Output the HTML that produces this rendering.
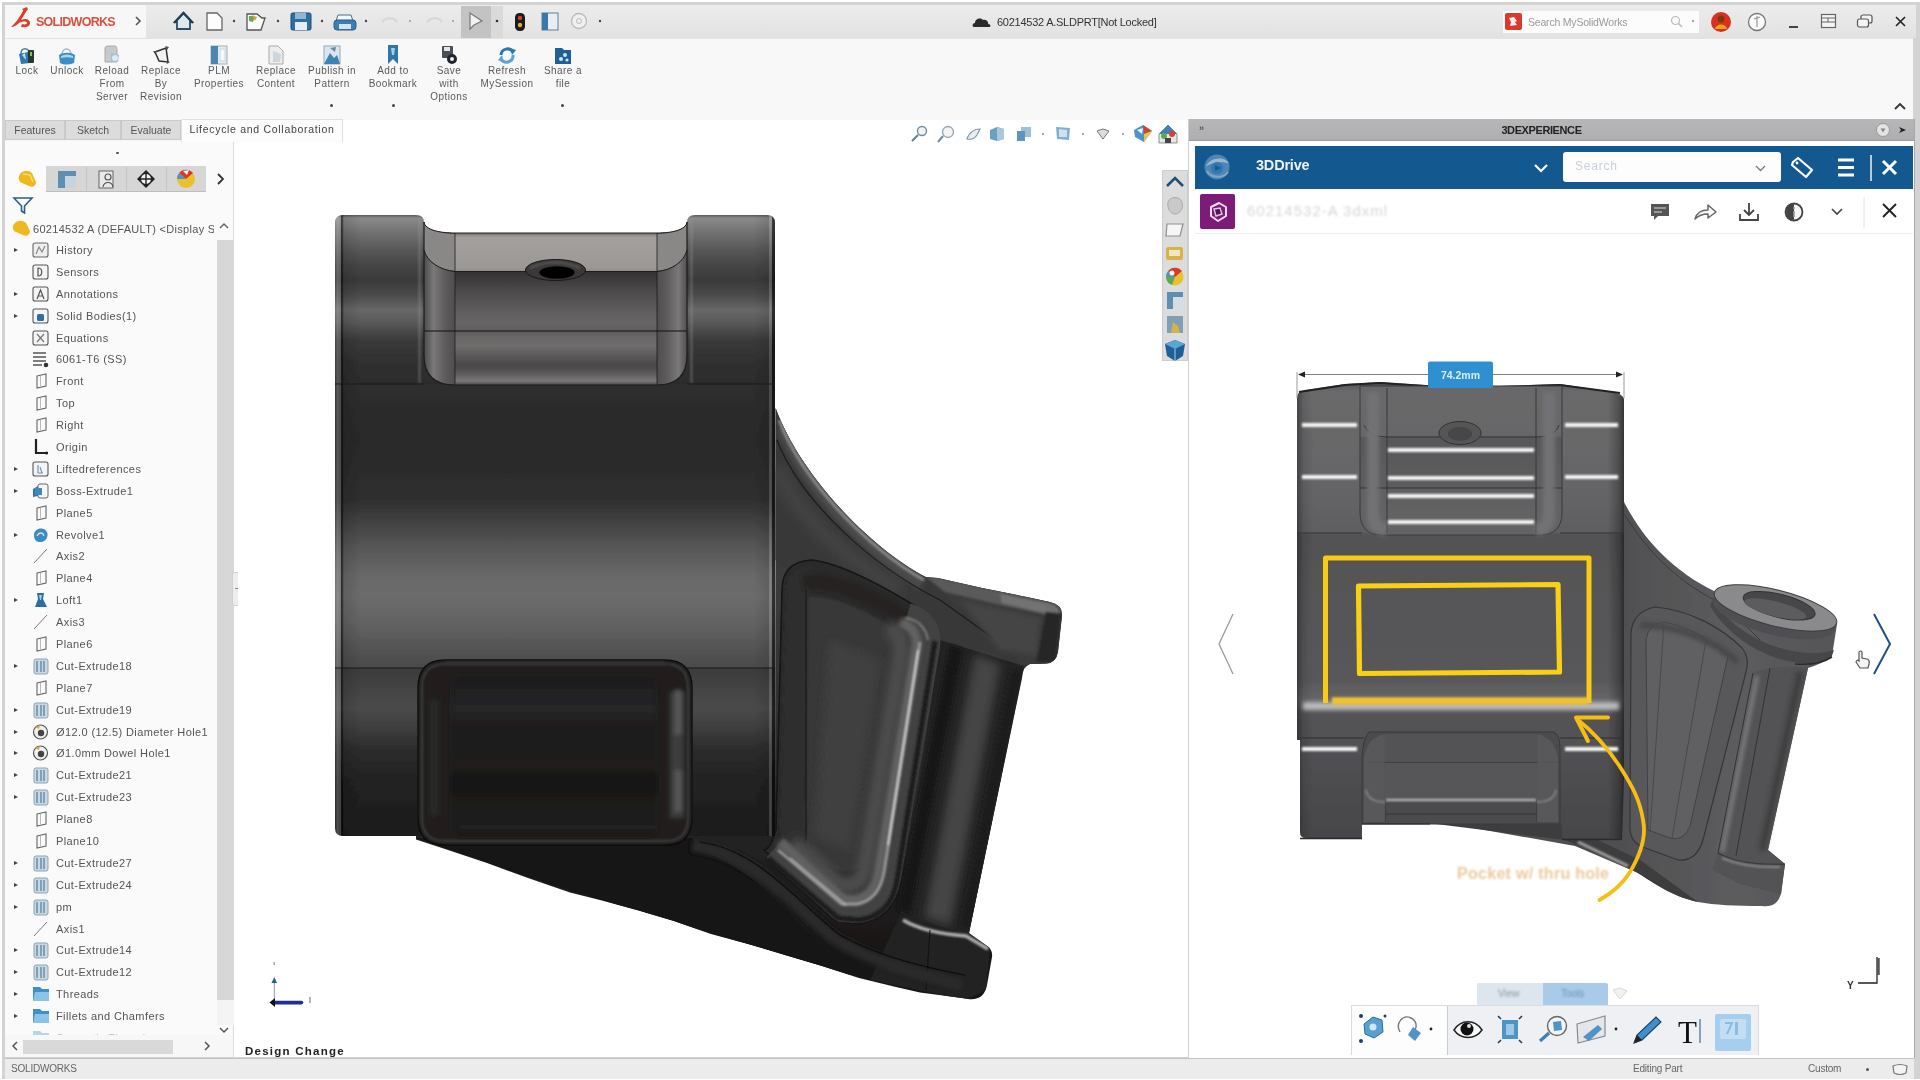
<!DOCTYPE html>
<html lang="en">
<head>
<meta charset="utf-8">
<title>SOLIDWORKS - Lifecycle and Collaboration</title>
<style>
html,body{margin:0;padding:0;}
body{width:1920px;height:1080px;overflow:hidden;position:relative;background:#fff;font-family:"Liberation Sans",sans-serif;font-size:11px;color:#333;}
.abs{position:absolute;}
#frame{position:absolute;left:1.5px;top:1.5px;width:1918px;height:1077.5px;background:#d3d3d3;}
#titlebar{position:absolute;left:5px;top:4.5px;width:1911px;height:33.5px;background:linear-gradient(#ececec,#e2e2e2);}
#logoarea{position:absolute;left:0;top:0;width:141px;height:34px;background:#f7f7f7;}
#ribbon{position:absolute;left:5px;top:38px;width:1908px;height:81px;background:#f8f8f8;border-top:1px solid #e3e3e3;box-sizing:border-box;}
.rb{position:absolute;top:6px;text-align:center;font-size:10px;line-height:12.8px;color:#5a5a5a;letter-spacing:.45px;filter:blur(.6px);}
.rb .ic{display:block;position:static;margin:0 auto 0;width:20px;height:20px;}
#tabs{position:absolute;left:5px;top:119px;height:23px;width:1183px;background:#f8f8f8;}
.tab{position:absolute;top:1px;height:20px;background:#dcdcdc;border:1px solid #c9c9c9;box-sizing:border-box;font-size:10.5px;line-height:19px;text-align:center;color:#555;filter:blur(.5px);}
.tab.on{letter-spacing:.7px;background:#fcfcfc;border-color:#e0e0e0;border-bottom:none;height:23px;top:0;color:#444;}
#left{position:absolute;left:5px;top:142px;width:229px;height:915px;background:#fafafa;border-right:1px solid #dcdcdc;box-sizing:border-box;}
#view{position:absolute;left:238px;top:142px;width:950px;height:915px;background:#fff;}
#tabs-white{position:absolute;left:343px;top:120px;width:845px;height:24px;background:#fff;}
#splitter{position:absolute;left:234px;top:142px;width:4px;height:915px;background:#fff;}
.tr{position:absolute;left:0;height:22px;width:215px;font-size:11px;line-height:22px;color:#444;white-space:nowrap;}
.tr .ar{position:absolute;left:9px;top:9px;width:0;height:0;border-left:4px solid #444;border-top:2.5px solid transparent;border-bottom:2.5px solid transparent;}
.tr .ti{position:absolute;left:27px;top:3px;width:17px;height:16px;}
.tr .tx{position:absolute;left:51px;top:0;filter:blur(.6px);letter-spacing:.4px;color:#555;}
#status{position:absolute;left:5px;top:1058px;width:1909px;height:21px;background:#ececec;border-top:1px solid #c4c4c4;box-sizing:border-box;font-size:10px;color:#666;}
#rpanel{position:absolute;left:1188px;top:119px;width:726px;height:939px;background:#fff;border-left:1px solid #d0d0d0;box-sizing:border-box;}
#rhead{position:absolute;left:0;top:0;width:725px;height:22px;background:linear-gradient(#b7b6b9,#aeadb0);border-bottom:1px solid #9c9c9e;box-sizing:border-box;font-size:11px;font-weight:bold;color:#222;text-align:center;line-height:22px;}
#bluebar{position:absolute;left:6px;top:27px;width:718px;height:43px;background:#13588f;}
#subbar{position:absolute;left:6px;top:70px;width:718px;height:44px;background:#fff;border-bottom:1px solid #efefef;}
svg{position:absolute;overflow:visible;}
.blur{filter:blur(.6px);}
</style>
</head>
<body>
<div id="frame"></div>
<div id="titlebar">
  <div id="logoarea"></div>
  <!-- DS logo + SOLIDWORKS -->
  <svg class="blur" style="left:2.5px;top:1px" width="140" height="28" viewBox="0 0 140 28">
    <path d="M3 21 C8 17 13 9 16 3 L19 4 C17 8 14 12 13 14 C17 12 22 13 22 17 C22 21 17 22 13 21 L14 18 C17 19 19 18 19 17 C19 15 15 15 11 17 C9 19 6 21 3 21Z" fill="#d8402c"/>
    <path d="M14 3 L19 1 L20 4 L16 5Z" fill="#d8402c"/>
    <text x="28" y="20" font-family="Liberation Sans, sans-serif" font-size="12.5" font-weight="bold" fill="#d9503f" letter-spacing="-0.6" textLength="79">SOLIDWORKS</text>
  </svg>
  <svg style="left:129px;top:10px" width="8" height="12"><path d="M2 2 L6 6 L2 10" fill="none" stroke="#555" stroke-width="1.6"/></svg>
  <!-- quick access icons -->
  <svg class="blur" style="left:160px;top:0" width="460" height="34" viewBox="0 0 460 34">
    <!-- home -->
    <path d="M10 17 L18.5 8 L27 17 L25 17 L25 24 L12 24 L12 17Z" fill="#dfe8ee" stroke="#2c4d66" stroke-width="1.8"/>
    <path d="M9 18 L18.5 8 L28 18" fill="none" stroke="#1f3f57" stroke-width="2.4"/>
    <!-- new -->
    <path d="M42 8 L52 8 L57 13 L57 25 L42 25Z" fill="#fdfdfd" stroke="#666" stroke-width="1.3"/>
    <circle cx="69" cy="16" r="1.2" fill="#444"/>
    <!-- open -->
    <path d="M82 9 L92 9 L97 13 L100 13 L96 25 L82 25Z" fill="#fafafa" stroke="#555" stroke-width="1.3"/>
    <path d="M84 11 L90 11 L88 17 L84 16Z" fill="#6aa84f"/>
    <path d="M87 10 L92 12 L90 16Z" fill="#d9a441"/>
    <circle cx="113" cy="16" r="1.2" fill="#444"/>
    <!-- save -->
    <rect x="126" y="8" width="20" height="17" rx="1.5" fill="#2f6f9e" stroke="#1f4f78" stroke-width="1"/>
    <rect x="130" y="8" width="11" height="6" fill="#8fb7d4"/>
    <rect x="130" y="17" width="12" height="8" fill="#e6edf3"/>
    <circle cx="157" cy="16" r="1.2" fill="#444"/>
    <!-- print -->
    <path d="M173 10 L186 10 L188 16 L171 16Z" fill="#f4f6f8" stroke="#4d6f8c" stroke-width="1"/>
    <rect x="169" y="15" width="22" height="10" rx="3" fill="#3b7fb0" stroke="#2a5d85" stroke-width="1"/>
    <rect x="174" y="19" width="12" height="5" fill="#d4e3ef"/>
    <circle cx="201" cy="16" r="1.2" fill="#444"/>
    <!-- undo / redo faint -->
    <path d="M217 17 C221 12 229 12 232 17" fill="none" stroke="#d6d6d6" stroke-width="2.2"/>
    <circle cx="245" cy="16" r="1" fill="#999"/>
    <path d="M262 17 C266 12 274 12 277 17" fill="none" stroke="#d6d6d6" stroke-width="2.2"/>
    <circle cx="288" cy="16" r="1" fill="#999"/>
    <!-- select highlighted -->
    <rect x="296" y="1" width="30" height="32" fill="#c3c3c3"/>
    <rect x="326" y="1" width="12" height="32" fill="#dadada"/>
    <path d="M305 8 L305 24 L309 20 L317 16Z" fill="#f2f2f2" stroke="#777" stroke-width="1.2"/>
    <circle cx="332" cy="16" r="1.3" fill="#333"/>
    <!-- traffic light -->
    <rect x="350" y="8" width="10" height="18" rx="4.5" fill="#1b1b1b"/>
    <circle cx="355" cy="13" r="2.2" fill="#d9412f"/>
    <circle cx="355" cy="20" r="2.2" fill="#d9b23a"/>
    <!-- options -->
    <rect x="377" y="8" width="16" height="17" fill="#e9eef2" stroke="#5f7f99" stroke-width="1"/>
    <rect x="377" y="8" width="6" height="17" fill="#3c78a6"/>
    <!-- gear -->
    <circle cx="414" cy="16" r="7.5" fill="#f0f0f0" stroke="#bbb" stroke-width="1.3"/>
    <circle cx="414" cy="16" r="2.5" fill="none" stroke="#bbb" stroke-width="1"/>
    <circle cx="435" cy="16" r="1.2" fill="#444"/>
  </svg>
  <!-- title -->
  <svg class="blur" style="left:966px;top:9px" width="200" height="18" viewBox="0 0 200 18">
    <path d="M3 13 C1 13 1 9 4 9 C4 5 9 3 12 6 C15 5 18 8 17 10 C20 10 20 13 18 13Z" fill="#2b2b2b"/>
  </svg>
  <div class="abs blur" style="left:992px;top:9px;width:170px;height:16px;font-size:11px;line-height:16px;color:#333;white-space:nowrap;letter-spacing:-.25px;">60214532 A.SLDPRT[Not Locked]</div>
  <!-- search -->
  <div class="abs" style="left:1498px;top:6px;width:196px;height:22px;background:#fcfcfc;"></div>
  <svg class="blur" style="left:1500px;top:8px" width="18" height="18"><rect x="0" y="0" width="17" height="17" rx="2" fill="#d93a2b"/><path d="M4 5 L9 4 L12 8 L10 9 L12 12 L5 13 L6 9Z" fill="#fff" opacity=".9"/></svg>
  <div class="abs blur" style="left:1523px;top:9px;font-size:10.5px;line-height:16px;color:#9a9a9a;white-space:nowrap;letter-spacing:-.2px;">Search MySolidWorks</div>
  <svg class="blur" style="left:1664px;top:9px" width="34" height="16"><circle cx="6.5" cy="6.5" r="4" fill="none" stroke="#bbb" stroke-width="1.2"/><path d="M9.5 9.5 L13 13" stroke="#bbb" stroke-width="1.4"/><circle cx="24" cy="7" r="1" fill="#888"/></svg>
  <!-- avatar -->
  <svg class="blur" style="left:1704px;top:5px" width="26" height="26"><circle cx="12" cy="12" r="10" fill="#d9301f"/><circle cx="12" cy="9" r="3.5" fill="#7a3b14"/><path d="M6 19 C7 13 17 13 18 19Z" fill="#e8a321"/></svg>
  <svg class="blur" style="left:1741px;top:6px" width="24" height="24"><circle cx="11" cy="11" r="8.5" fill="#fafafa" stroke="#777" stroke-width="1.3"/><path d="M11 5 L11 16 M8 8 L14 6" stroke="#999" stroke-width="1.2" fill="none"/></svg>
  <div class="abs" style="left:1784px;top:21px;width:9px;height:2px;background:#444;filter:blur(.4px)"></div>
  <svg class="blur" style="left:1815px;top:8px" width="20" height="18"><rect x="1.5" y="1.5" width="14" height="13" fill="#f4f4f4" stroke="#666" stroke-width="1.2"/><path d="M1.5 5 H15.5 M1.5 9 H15.5 M8 5 V9" stroke="#666" stroke-width="1"/></svg>
  <svg class="blur" style="left:1851px;top:8px" width="20" height="18"><rect x="5" y="2" width="11" height="8" rx="2" fill="#f4f4f4" stroke="#555" stroke-width="1.2"/><rect x="1.5" y="6" width="11" height="8" rx="2" fill="#f4f4f4" stroke="#555" stroke-width="1.2"/></svg>
  <svg class="blur" style="left:1889px;top:10px" width="14" height="14"><path d="M2 2 L11 11 M11 2 L2 11" stroke="#222" stroke-width="1.6"/></svg>
</div>
<div id="ribbon">
  <div class="rb" style="left:2px;width:40px"><svg class="ic" viewBox="0 0 20 20"><path d="M4 9 C4 2 12 2 12 9" fill="none" stroke="#4b7fa6" stroke-width="1.6"/><path d="M2 9 L11 7 L13 18 L4 19Z" fill="#2f79ad"/><path d="M5 10 L8 8 L9 15Z" fill="#bfe0f2"/><rect x="11" y="5" width="6" height="13" rx="1" fill="#263a2c"/><rect x="13" y="7" width="2" height="4" fill="#8bc34a"/></svg>Lock</div>
  <div class="rb" style="left:40px;width:44px"><svg class="ic" viewBox="0 0 20 20"><path d="M5 10 C5 2 14 2 14 10" fill="none" stroke="#9fb6c6" stroke-width="1.6"/><path d="M2 10 C6 7 14 7 18 10 L17 18 C12 20 7 20 3 18Z" fill="#3c8fc4"/><path d="M4 11 C8 9 12 9 16 11 L16 13 C12 12 8 12 4 13Z" fill="#a8d4ee"/></svg>Unlock</div>
  <div class="rb" style="left:82px;width:50px"><svg class="ic" viewBox="0 0 20 20"><path d="M3 3 C3 1 6 1 8 1 L13 1 C15 1 15 4 15 6 L15 17 L3 17Z" fill="#c9c9c9" stroke="#a9a9a9"/><path d="M9 8 L17 10 L16 17 L9 17Z" fill="#9fc1d8"/><circle cx="13" cy="13" r="3" fill="#dfeaf1"/></svg>Reload<br>From<br>Server</div>
  <div class="rb" style="left:130px;width:52px"><svg class="ic" viewBox="0 0 20 20"><path d="M4 7 L15 3 L17 17 L8 16Z" fill="#f2f2f2" stroke="#2f2f2f" stroke-width="1.5"/><path d="M2 6 L6 6 L4 9Z M14 1 L18 2 L16 5Z M15 16 L19 17 L16 19Z" fill="#3d5468"/></svg>Replace<br>By<br>Revision</div>
  <div class="rb" style="left:184px;width:60px"><svg class="ic" viewBox="0 0 20 20"><rect x="2" y="1" width="16" height="18" fill="#e7ebee" stroke="#9fb0bc"/><rect x="2" y="1" width="7" height="18" fill="#4b86b3"/><rect x="11" y="4" width="5" height="12" fill="#f7f7f7" stroke="#b9c3ca" stroke-width=".6"/></svg>PLM<br>Properties</div>
  <div class="rb" style="left:244px;width:54px"><svg class="ic" viewBox="0 0 20 20"><path d="M3 1 L12 1 L17 6 L17 19 L3 19Z" fill="#ededed" stroke="#ababab"/><path d="M7 6 L15 9 L14 17 L7 17Z" fill="#cfd6db"/></svg>Replace<br>Content</div>
  <div class="rb" style="left:297px;width:60px"><svg class="ic" viewBox="0 0 20 20"><rect x="2" y="1" width="16" height="18" fill="#d9e6ef" stroke="#8fa9bb"/><path d="M2 19 L8 8 L12 13 L15 10 L18 19Z" fill="#3d82b3"/><path d="M8 3 L14 2 L13 7Z" fill="#6f8797"/></svg>Publish in<br>Pattern</div>
  <div class="rb" style="left:360px;width:56px"><svg class="ic" viewBox="0 0 20 20"><path d="M5 0 L15 0 L15 19 L10 14 L5 19Z" fill="#2f77ab"/><path d="M8 3 L12 3 L11 10 L9 10Z" fill="#9fd0ee"/></svg>Add to<br>Bookmark</div>
  <div class="rb" style="left:420px;width:48px"><svg class="ic" viewBox="0 0 20 20"><rect x="3" y="1" width="11" height="12" rx="1" fill="#4a4f57"/><rect x="5" y="2" width="6" height="4" fill="#e6e6e6"/><circle cx="13" cy="14" r="5" fill="#20262e"/><circle cx="13" cy="14" r="2" fill="#eee"/></svg>Save<br>with<br>Options</div>
  <div class="rb" style="left:472px;width:60px"><svg class="ic" viewBox="0 0 20 20"><path d="M4 10 A6.5 6.5 0 0 1 16 7" fill="none" stroke="#2a78ad" stroke-width="3"/><path d="M16 10 A6.5 6.5 0 0 1 4 14" fill="none" stroke="#5aa5d4" stroke-width="3"/><path d="M13 3 L19 5 L15 10Z" fill="#2a78ad"/><path d="M7 18 L1 15 L5 10Z" fill="#5aa5d4"/></svg>Refresh<br>MySession</div>
  <div class="rb" style="left:536px;width:44px"><svg class="ic" viewBox="0 0 20 20"><path d="M2 3 L9 3 L11 5 L18 5 L18 19 L2 19Z" fill="#1f5f98"/><circle cx="12" cy="10" r="2" fill="#cfe6f6"/><circle cx="8" cy="14" r="2" fill="#cfe6f6"/><circle cx="14" cy="15" r="1.6" fill="#cfe6f6"/></svg>Share a<br>file</div>
  <div class="abs" style="left:325px;top:65px;width:3px;height:3px;border-radius:2px;background:#444;filter:blur(.3px)"></div>
  <div class="abs" style="left:387px;top:65px;width:3px;height:3px;border-radius:2px;background:#444;filter:blur(.3px)"></div>
  <div class="abs" style="left:556px;top:65px;width:3px;height:3px;border-radius:2px;background:#444;filter:blur(.3px)"></div>
  <svg style="left:1888px;top:62px" width="14" height="10"><path d="M2 8 L7 3 L12 8" fill="none" stroke="#333" stroke-width="1.8"/></svg>
</div>
<div id="tabs">
  <div class="tab" style="left:0;width:60px">Features</div>
  <div class="tab" style="left:60px;width:56px">Sketch</div>
  <div class="tab" style="left:116px;width:60px">Evaluate</div>
  <div class="tab on" style="left:176px;width:162px">Lifecycle and Collaboration</div>
</div>
<div id="tabs-white"></div>
<div id="left">
<div class="abs" style="left:111px;top:10px;width:3px;height:2px;background:#555;border-radius:1px"></div>
<div class="abs" style="left:3px;top:24px;width:38px;height:26px;background:#fbfbfb;"></div>
<div class="abs" style="left:41px;top:24px;width:160px;height:26px;background:#d6d6d6;border-bottom:1px solid #bdbdbd;box-sizing:border-box"></div>
<div class="abs" style="left:81px;top:25px;width:1px;height:24px;background:#c6c6c6"></div>
<div class="abs" style="left:121px;top:25px;width:1px;height:24px;background:#c6c6c6"></div>
<div class="abs" style="left:161px;top:25px;width:1px;height:24px;background:#c6c6c6"></div>
<svg class="blur" style="left:0;top:24px" width="230" height="26" viewBox="0 0 230 26">
<path d="M15 8 C18 4 24 4 27 7 L31 16 C31 20 27 22 24 20 L17 17 C13 15 13 11 15 8Z" fill="#f0b81f"/><path d="M18 8 L25 9 L28 16" fill="none" stroke="#f8d978" stroke-width="1.5"/>
<rect x="53" y="5" width="18" height="17" fill="#5f8fb0"/><rect x="60" y="10" width="11" height="12" fill="#c9d3da"/>
<rect x="94" y="5" width="14" height="17" fill="#e9e9e9" stroke="#666" stroke-width="1"/><circle cx="103" cy="11" r="3" fill="none" stroke="#555" stroke-width="1.2"/><path d="M98 21 C99 15 107 15 108 21" fill="none" stroke="#555" stroke-width="1.2"/>
<path d="M141 4 L150 13 L141 22 L132 13Z" fill="#222"/><circle cx="141" cy="13" r="5" fill="#f2f2f2"/><path d="M141 8 V18 M136 13 H146" stroke="#222" stroke-width="1.4"/>
<circle cx="181" cy="13" r="9" fill="#e9c12f"/><path d="M181 13 L174 7 A9 9 0 0 1 188 7Z" fill="#d63a2a"/><path d="M181 13 L172 13 A9 9 0 0 1 174 7Z" fill="#4f94c8"/><path d="M178 5 L184 4 L182 9Z" fill="#f4f4f4"/>
<path d="M213 8 L218 13 L213 18" fill="none" stroke="#333" stroke-width="1.8"/>
</svg>
<svg class="blur" style="left:8px;top:54px" width="22" height="20"><path d="M1 2 H19 L11.5 10 V17 L8.5 15 V10Z" fill="#fafafa" stroke="#2f5f86" stroke-width="1.6"/></svg>
<svg class="blur" style="left:5px;top:77px" width="22" height="20"><path d="M4 5 C7 1 13 1 16 4 L20 12 C20 16 16 18 13 16 L6 13 C2 11 2 8 4 5Z" fill="#f0b81f"/></svg>
<div class="abs blur" style="left:28px;top:76px;width:181px;height:22px;line-height:22px;font-size:11px;color:#555;white-space:nowrap;overflow:hidden;letter-spacing:.3px">60214532 A (DEFAULT) &lt;Display St</div>
<svg style="left:214px;top:80px" width="10" height="8"><path d="M1 6 L5 2 L9 6" fill="none" stroke="#666" stroke-width="1.5"/></svg>
<div class="abs" style="left:212px;top:98px;width:18px;height:785px;background:#f4f4f4"></div>
<div class="abs" style="left:212px;top:98px;width:18px;height:760px;background:#d7d7d7"></div>
<svg style="left:213px;top:884px" width="12" height="8"><path d="M2 2 L6 6 L10 2" fill="none" stroke="#555" stroke-width="1.5"/></svg>
<div class="tr" style="top:97.0px"><i class="ar"></i><svg class="ti blur" viewBox="0 0 17 16"><rect x="1" y="1" width="15" height="14" rx="2" fill="#eee" stroke="#666" stroke-width="1.1"/><path d="M4 12 L7 5 L10 10 L13 4" fill="none" stroke="#888" stroke-width="1.2"/></svg><span class="tx">History</span></div>
<div class="tr" style="top:118.9px"><svg class="ti blur" viewBox="0 0 17 16"><rect x="1" y="1" width="15" height="14" rx="2" fill="#f4f4f4" stroke="#555" stroke-width="1.1"/><path d="M6 4 C11 4 11 12 6 12Z" fill="none" stroke="#555" stroke-width="1.2"/></svg><span class="tx">Sensors</span></div>
<div class="tr" style="top:140.8px"><i class="ar"></i><svg class="ti blur" viewBox="0 0 17 16"><rect x="1" y="1" width="15" height="14" rx="2" fill="#f4f4f4" stroke="#555" stroke-width="1.1"/><path d="M5 13 L8.5 4 L12 13 M6.5 10 H10.5" fill="none" stroke="#555" stroke-width="1.2"/></svg><span class="tx">Annotations</span></div>
<div class="tr" style="top:162.7px"><i class="ar"></i><svg class="ti blur" viewBox="0 0 17 16"><rect x="1" y="1" width="15" height="14" rx="2" fill="#f4f4f4" stroke="#555" stroke-width="1.1"/><rect x="5" y="6" width="7" height="7" rx="1.5" fill="#2c6fa3"/></svg><span class="tx">Solid Bodies(1)</span></div>
<div class="tr" style="top:184.5px"><svg class="ti blur" viewBox="0 0 17 16"><rect x="1" y="1" width="15" height="14" rx="2" fill="#f4f4f4" stroke="#555" stroke-width="1.1"/><path d="M5 4 L12 12 M12 4 L5 12" stroke="#777" stroke-width="1.2"/></svg><span class="tx">Equations</span></div>
<div class="tr" style="top:206.4px"><svg class="ti blur" viewBox="0 0 17 16"><path d="M1 2 H14 M1 6 H14 M1 10 H14 M1 14 H10" stroke="#555" stroke-width="1.6"/><circle cx="14" cy="14" r="2.3" fill="#333"/></svg><span class="tx">6061-T6 (SS)</span></div>
<div class="tr" style="top:228.3px"><svg class="ti blur" viewBox="0 0 17 16"><path d="M5 3 L14 1 L14 13 L5 15Z" fill="#fafafa" stroke="#666" stroke-width="1.1"/><path d="M8.5 3 V13" stroke="#aaa" stroke-width=".8"/></svg><span class="tx">Front</span></div>
<div class="tr" style="top:250.2px"><svg class="ti blur" viewBox="0 0 17 16"><path d="M5 3 L14 1 L14 13 L5 15Z" fill="#fafafa" stroke="#666" stroke-width="1.1"/><path d="M8.5 3 V13" stroke="#aaa" stroke-width=".8"/></svg><span class="tx">Top</span></div>
<div class="tr" style="top:272.1px"><svg class="ti blur" viewBox="0 0 17 16"><path d="M5 3 L14 1 L14 13 L5 15Z" fill="#fafafa" stroke="#666" stroke-width="1.1"/><path d="M8.5 3 V13" stroke="#aaa" stroke-width=".8"/></svg><span class="tx">Right</span></div>
<div class="tr" style="top:294.0px"><svg class="ti blur" viewBox="0 0 17 16"><path d="M4 0 V14 H16" fill="none" stroke="#222" stroke-width="2.2"/><circle cx="14.5" cy="14" r="1.6" fill="#222"/></svg><span class="tx">Origin</span></div>
<div class="tr" style="top:315.9px"><i class="ar"></i><svg class="ti blur" viewBox="0 0 17 16"><rect x="1" y="1" width="15" height="14" rx="2" fill="#f4f4f4" stroke="#555" stroke-width="1.1"/><path d="M6 4 V12 H11 M8 6 L10 12" fill="none" stroke="#6b93b3" stroke-width="1.1"/></svg><span class="tx">Liftedreferences</span></div>
<div class="tr" style="top:337.7px"><i class="ar"></i><svg class="ti blur" viewBox="0 0 17 16"><path d="M1 6 L6 3 L6 13 L1 14Z" fill="#2f79ad"/><rect x="6" y="1" width="10" height="14" rx="2" fill="#f6f6f6" stroke="#666" stroke-width="1"/><path d="M3 5 L10 5 L10 12 L3 12Z" fill="#3d8ac0"/></svg><span class="tx">Boss-Extrude1</span></div>
<div class="tr" style="top:359.6px"><svg class="ti blur" viewBox="0 0 17 16"><path d="M5 3 L14 1 L14 13 L5 15Z" fill="#fafafa" stroke="#666" stroke-width="1.1"/><path d="M8.5 3 V13" stroke="#aaa" stroke-width=".8"/></svg><span class="tx">Plane5</span></div>
<div class="tr" style="top:381.5px"><i class="ar"></i><svg class="ti blur" viewBox="0 0 17 16"><path d="M2 8 C2 1 12 -1 15 5 C17 10 13 16 7 15 C4 15 2 12 2 8Z" fill="#3d8ac0"/><path d="M5 9 C7 5 11 5 12 9" fill="none" stroke="#bfe0f2" stroke-width="1.3"/></svg><span class="tx">Revolve1</span></div>
<div class="tr" style="top:403.4px"><svg class="ti blur" viewBox="0 0 17 16"><path d="M2 15 L15 1" stroke="#777" stroke-width="1"/></svg><span class="tx">Axis2</span></div>
<div class="tr" style="top:425.3px"><svg class="ti blur" viewBox="0 0 17 16"><path d="M5 3 L14 1 L14 13 L5 15Z" fill="#fafafa" stroke="#666" stroke-width="1.1"/><path d="M8.5 3 V13" stroke="#aaa" stroke-width=".8"/></svg><span class="tx">Plane4</span></div>
<div class="tr" style="top:447.2px"><i class="ar"></i><svg class="ti blur" viewBox="0 0 17 16"><path d="M5 1 L12 1 L11 7 L15 15 L3 15 L6 7Z" fill="#2a6ea3"/><path d="M7 3 L10 3 L9 8 L8 8Z" fill="#9fd0ee"/></svg><span class="tx">Loft1</span></div>
<div class="tr" style="top:469.1px"><svg class="ti blur" viewBox="0 0 17 16"><path d="M2 15 L15 1" stroke="#777" stroke-width="1"/></svg><span class="tx">Axis3</span></div>
<div class="tr" style="top:490.9px"><svg class="ti blur" viewBox="0 0 17 16"><path d="M5 3 L14 1 L14 13 L5 15Z" fill="#fafafa" stroke="#666" stroke-width="1.1"/><path d="M8.5 3 V13" stroke="#aaa" stroke-width=".8"/></svg><span class="tx">Plane6</span></div>
<div class="tr" style="top:512.8px"><i class="ar"></i><svg class="ti blur" viewBox="0 0 17 16"><rect x="2" y="1" width="14" height="15" rx="2" fill="#c9d9e4" stroke="#8fa3b1" stroke-width="1"/><path d="M5 3 V14 M9 3 V14 M12 3 V14" stroke="#6d93ad" stroke-width="1.6"/></svg><span class="tx">Cut-Extrude18</span></div>
<div class="tr" style="top:534.7px"><svg class="ti blur" viewBox="0 0 17 16"><path d="M5 3 L14 1 L14 13 L5 15Z" fill="#fafafa" stroke="#666" stroke-width="1.1"/><path d="M8.5 3 V13" stroke="#aaa" stroke-width=".8"/></svg><span class="tx">Plane7</span></div>
<div class="tr" style="top:556.6px"><i class="ar"></i><svg class="ti blur" viewBox="0 0 17 16"><rect x="2" y="1" width="14" height="15" rx="2" fill="#c9d9e4" stroke="#8fa3b1" stroke-width="1"/><path d="M5 3 V14 M9 3 V14 M12 3 V14" stroke="#6d93ad" stroke-width="1.6"/></svg><span class="tx">Cut-Extrude19</span></div>
<div class="tr" style="top:578.5px"><i class="ar"></i><svg class="ti blur" viewBox="0 0 17 16"><circle cx="8.5" cy="8" r="7" fill="#f0f0f0" stroke="#555" stroke-width="1.2"/><circle cx="9" cy="9" r="3.2" fill="#444"/><path d="M3 3 L8 1 L7 5Z" fill="#d9a441"/></svg><span class="tx">Ø12.0 (12.5) Diameter Hole1</span></div>
<div class="tr" style="top:600.4px"><i class="ar"></i><svg class="ti blur" viewBox="0 0 17 16"><circle cx="8.5" cy="8" r="7" fill="#f0f0f0" stroke="#555" stroke-width="1.2"/><circle cx="9" cy="9" r="3.2" fill="#444"/><path d="M3 3 L8 1 L7 5Z" fill="#d9a441"/></svg><span class="tx">Ø1.0mm Dowel Hole1</span></div>
<div class="tr" style="top:622.3px"><i class="ar"></i><svg class="ti blur" viewBox="0 0 17 16"><rect x="2" y="1" width="14" height="15" rx="2" fill="#c9d9e4" stroke="#8fa3b1" stroke-width="1"/><path d="M5 3 V14 M9 3 V14 M12 3 V14" stroke="#6d93ad" stroke-width="1.6"/></svg><span class="tx">Cut-Extrude21</span></div>
<div class="tr" style="top:644.1px"><i class="ar"></i><svg class="ti blur" viewBox="0 0 17 16"><rect x="2" y="1" width="14" height="15" rx="2" fill="#c9d9e4" stroke="#8fa3b1" stroke-width="1"/><path d="M5 3 V14 M9 3 V14 M12 3 V14" stroke="#6d93ad" stroke-width="1.6"/></svg><span class="tx">Cut-Extrude23</span></div>
<div class="tr" style="top:666.0px"><svg class="ti blur" viewBox="0 0 17 16"><path d="M5 3 L14 1 L14 13 L5 15Z" fill="#fafafa" stroke="#666" stroke-width="1.1"/><path d="M8.5 3 V13" stroke="#aaa" stroke-width=".8"/></svg><span class="tx">Plane8</span></div>
<div class="tr" style="top:687.9px"><svg class="ti blur" viewBox="0 0 17 16"><path d="M5 3 L14 1 L14 13 L5 15Z" fill="#fafafa" stroke="#666" stroke-width="1.1"/><path d="M8.5 3 V13" stroke="#aaa" stroke-width=".8"/></svg><span class="tx">Plane10</span></div>
<div class="tr" style="top:709.8px"><i class="ar"></i><svg class="ti blur" viewBox="0 0 17 16"><rect x="2" y="1" width="14" height="15" rx="2" fill="#c9d9e4" stroke="#8fa3b1" stroke-width="1"/><path d="M5 3 V14 M9 3 V14 M12 3 V14" stroke="#6d93ad" stroke-width="1.6"/></svg><span class="tx">Cut-Extrude27</span></div>
<div class="tr" style="top:731.7px"><i class="ar"></i><svg class="ti blur" viewBox="0 0 17 16"><rect x="2" y="1" width="14" height="15" rx="2" fill="#c9d9e4" stroke="#8fa3b1" stroke-width="1"/><path d="M5 3 V14 M9 3 V14 M12 3 V14" stroke="#6d93ad" stroke-width="1.6"/></svg><span class="tx">Cut-Extrude24</span></div>
<div class="tr" style="top:753.6px"><i class="ar"></i><svg class="ti blur" viewBox="0 0 17 16"><rect x="2" y="1" width="14" height="15" rx="2" fill="#c9d9e4" stroke="#8fa3b1" stroke-width="1"/><path d="M5 3 V14 M9 3 V14 M12 3 V14" stroke="#6d93ad" stroke-width="1.6"/></svg><span class="tx">pm</span></div>
<div class="tr" style="top:775.5px"><svg class="ti blur" viewBox="0 0 17 16"><path d="M2 15 L15 1" stroke="#777" stroke-width="1"/></svg><span class="tx">Axis1</span></div>
<div class="tr" style="top:797.4px"><i class="ar"></i><svg class="ti blur" viewBox="0 0 17 16"><rect x="2" y="1" width="14" height="15" rx="2" fill="#c9d9e4" stroke="#8fa3b1" stroke-width="1"/><path d="M5 3 V14 M9 3 V14 M12 3 V14" stroke="#6d93ad" stroke-width="1.6"/></svg><span class="tx">Cut-Extrude14</span></div>
<div class="tr" style="top:819.2px"><i class="ar"></i><svg class="ti blur" viewBox="0 0 17 16"><rect x="2" y="1" width="14" height="15" rx="2" fill="#c9d9e4" stroke="#8fa3b1" stroke-width="1"/><path d="M5 3 V14 M9 3 V14 M12 3 V14" stroke="#6d93ad" stroke-width="1.6"/></svg><span class="tx">Cut-Extrude12</span></div>
<div class="tr" style="top:841.1px"><i class="ar"></i><svg class="ti blur" viewBox="0 0 17 16"><path d="M1 1 H8 L10 3 H17 V15 H1Z" fill="#3f8fc8"/><path d="M3 6 H17 V15 H1Z" fill="#8cc3e8"/></svg><span class="tx">Threads</span></div>
<div class="tr" style="top:863.0px"><i class="ar"></i><svg class="ti blur" viewBox="0 0 17 16"><path d="M1 1 H8 L10 3 H17 V15 H1Z" fill="#3f8fc8"/><path d="M3 6 H17 V15 H1Z" fill="#8cc3e8"/></svg><span class="tx">Fillets and Chamfers</span></div>
<div class="tr" style="top:884.9px;opacity:.35;height:12px;overflow:hidden"><i class="ar"></i><svg class="ti blur" viewBox="0 0 17 16"><path d="M1 1 H8 L10 3 H17 V15 H1Z" fill="#3f8fc8"/><path d="M3 6 H17 V15 H1Z" fill="#8cc3e8"/></svg><span class="tx">Cosmetic Threads</span></div>
<div class="abs" style="left:0;top:893px;width:228px;height:22px;background:#f7f7f7"></div>
<div class="abs" style="left:18px;top:898px;width:150px;height:14px;background:#d9d9d9"></div>
<svg style="left:6px;top:898px" width="8" height="12"><path d="M6 2 L2 6 L6 10" fill="none" stroke="#555" stroke-width="1.5"/></svg>
<svg style="left:198px;top:898px" width="8" height="12"><path d="M2 2 L6 6 L2 10" fill="none" stroke="#555" stroke-width="1.5"/></svg>
</div>
<div id="splitter"></div>
<div class="abs" style="left:232px;top:572px;width:9px;height:34px;background:#ededed;border:1px solid #d0d0d0;box-sizing:border-box;border-radius:2px"></div>
<div class="abs" style="left:235px;top:588px;width:4px;height:1px;background:#888"></div>
<div id="view"></div>
<!-- heads-up view toolbar -->
<svg class="blur" style="left:905px;top:122px" width="280" height="24" viewBox="0 0 280 24">
  <circle cx="17" cy="9" r="4.5" fill="#f4f4f4" stroke="#6f8ea6" stroke-width="1.4"/><path d="M13 13 L7 19" stroke="#5f7f99" stroke-width="2"/>
  <circle cx="43" cy="10" r="5.5" fill="#f4f4f4" stroke="#8fa3b1" stroke-width="1.3"/><path d="M38 14 L33 20" stroke="#6f8ea6" stroke-width="2"/>
  <path d="M62 17 C64 10 70 7 75 7 L72 13 C70 16 66 18 62 17Z" fill="#e8eef2" stroke="#7f99ad" stroke-width="1.2"/>
  <path d="M85 8 L92 5 L99 7 L99 17 L92 19 L85 17Z" fill="#6c9fc4"/><path d="M92 5 L99 7 L99 17 L92 19Z" fill="#a8c8de"/>
  <path d="M112 9 L120 9 L120 19 L112 19Z" fill="#5f95bd"/><path d="M116 5 L126 5 L126 15 L120 15 L120 9 L116 9Z" fill="#9fc1d8"/>
  <circle cx="138" cy="12" r="1" fill="#888"/>
  <path d="M151 5 L165 6 L164 18 L152 17Z" fill="#7fb0d2"/><path d="M154 7 L162 8 L162 15 L154 15Z" fill="#cfe1ee"/>
  <circle cx="178" cy="12" r="1" fill="#888"/>
  <path d="M192 9 L198 7 L204 9 L198 17Z" fill="#ddd" stroke="#777" stroke-width="1"/>
  <circle cx="218" cy="12" r="1" fill="#888"/>
  <path d="M229 8 L238 3 L247 9 L239 20 L230 15Z" fill="#4f94c8"/><path d="M238 3 L247 9 L239 12Z" fill="#d9412f"/><path d="M239 12 L247 9 L239 20Z" fill="#e8c45a"/><path d="M232 8 L238 6 L237 12Z" fill="#f2f2f2"/>
  <path d="M254 12 L263 3 L272 12 L272 21 L254 21Z" fill="#e6e6e6" stroke="#777" stroke-width=".8"/><path d="M254 12 L263 3 L272 12" fill="#3d82b3"/><circle cx="259" cy="14" r="3" fill="#5fa84f"/><circle cx="267" cy="12" r="3" fill="#d9412f"/><rect x="260" y="16" width="6" height="5" fill="#444"/>
</svg>
<!-- vertical task toolbar -->
<div class="abs" style="left:1162px;top:170px;width:26px;height:191px;background:#dcdcdc;border:1px solid #cdcdcd;box-sizing:border-box"></div>
<svg class="blur" style="left:1162px;top:170px" width="26" height="191" viewBox="0 0 26 191">
  <path d="M5 16 L13 8 L21 16" fill="none" stroke="#1f4f78" stroke-width="2.6"/>
  <path d="M6 32 C8 26 18 26 20 32 C22 38 18 44 13 44 C8 44 5 38 6 32Z" fill="#c9c9c9" stroke="#aaa" stroke-width="1"/>
  <path d="M5 54 L21 54 L18 66 L4 66Z" fill="#f6f6f6" stroke="#8f8f8f" stroke-width="1.2"/>
  <rect x="4" y="77" width="17" height="13" rx="2" fill="#d7b24a"/><rect x="7" y="80" width="11" height="6" fill="#f0e6c0"/>
  <circle cx="13" cy="107" r="8.5" fill="#e8c12f"/><path d="M13 107 L6 101 A9 9 0 0 1 20 101Z" fill="#d63a2a"/><path d="M13 107 L4 107 A9 9 0 0 1 6 101Z" fill="#4f94c8"/><path d="M13 107 L10 115 A9 9 0 0 1 4 107Z" fill="#5fa84f"/><circle cx="10" cy="103" r="2.5" fill="#f2f2f2"/>
  <rect x="5" y="122" width="16" height="17" fill="#5f8fb0"/><rect x="11" y="127" width="10" height="12" fill="#d4dde3"/>
  <rect x="5" y="146" width="16" height="17" fill="#7f9fb5"/><path d="M9 163 L11 152 L16 156 L18 163Z" fill="#d7b24a"/>
  <path d="M3 174 L13 170 L23 174 L21 186 L13 191 L5 186Z" fill="#1f5f98"/><path d="M13 170 L23 174 L13 179 L3 174Z" fill="#5aa5d4"/><path d="M13 179 L13 191" stroke="#9fd0ee" stroke-width="1"/>
</svg>
<!-- triad -->
<svg class="blur" style="left:264px;top:958px" width="54" height="54" viewBox="0 0 54 54">
  <path d="M10.300 24 V43" stroke="#8a9aa5" stroke-width="1"/><path d="M7.500 25 L10.300 19 L13 25Z" fill="#2a5f80"/>
  <path d="M9 44.600 H37.500" stroke="#1e2f8f" stroke-width="3.600" stroke-linecap="round"/><path d="M5.500 44.600 L11 40 L11 49Z" fill="#111"/>
  <rect x="9.500" y="4" width="1.500" height="3" fill="#aaa"/><rect x="45" y="39" width="2" height="6" fill="#b4b0c0"/>
</svg>
<div class="abs" style="left:245px;top:1045px;font-size:11.5px;font-weight:bold;color:#222;letter-spacing:1.25px;filter:blur(.5px)">Design Change</div>
<svg id="model" style="left:0;top:0" width="1920" height="1080" viewBox="0 0 1920 1080">
<defs>
  <linearGradient id="gLug" x1="0" y1="215" x2="0" y2="384" gradientUnits="userSpaceOnUse"><stop offset="0.000" stop-color="#5a5a5a"/><stop offset="0.018" stop-color="#8a8a8a"/><stop offset="0.101" stop-color="#727272"/><stop offset="0.195" stop-color="#5a5a5a"/><stop offset="0.296" stop-color="#464646"/><stop offset="0.385" stop-color="#3a3a3a"/><stop offset="0.473" stop-color="#4a4a4a"/><stop offset="0.562" stop-color="#686868"/><stop offset="0.633" stop-color="#5a5a5a"/><stop offset="0.740" stop-color="#3a3a3a"/><stop offset="0.858" stop-color="#303030"/><stop offset="1.000" stop-color="#2c2c2c"/></linearGradient>
  <linearGradient id="gBody" x1="0" y1="384" x2="0" y2="668" gradientUnits="userSpaceOnUse"><stop offset="0.000" stop-color="#2e2e2e"/><stop offset="0.197" stop-color="#292929"/><stop offset="0.408" stop-color="#2f2f2f"/><stop offset="0.496" stop-color="#444"/><stop offset="0.577" stop-color="#575757"/><stop offset="0.673" stop-color="#686868"/><stop offset="0.743" stop-color="#6c6c6c"/><stop offset="0.831" stop-color="#646464"/><stop offset="0.919" stop-color="#565656"/><stop offset="1.000" stop-color="#4a4a4a"/></linearGradient>
  <linearGradient id="gLow" x1="0" y1="668" x2="0" y2="836" gradientUnits="userSpaceOnUse"><stop offset="0.000" stop-color="#3c3c3c"/><stop offset="0.131" stop-color="#444"/><stop offset="0.238" stop-color="#4a4a4a"/><stop offset="0.339" stop-color="#404040"/><stop offset="0.476" stop-color="#2d2d2d"/><stop offset="0.667" stop-color="#222"/><stop offset="1.000" stop-color="#1c1c1c"/></linearGradient>
  <linearGradient id="gEdgeL" x1="335" y1="0" x2="775" y2="0" gradientUnits="userSpaceOnUse">
    <stop offset="0" stop-color="#fff" stop-opacity=".05"/><stop offset=".006" stop-color="#fff" stop-opacity=".22"/><stop offset=".012" stop-color="#fff" stop-opacity=".12"/><stop offset=".0135" stop-color="#000" stop-opacity=".6"/><stop offset=".017" stop-color="#000" stop-opacity=".5"/><stop offset=".02" stop-color="#000" stop-opacity=".12"/><stop offset=".06" stop-color="#000" stop-opacity="0"/>
    <stop offset=".95" stop-color="#000" stop-opacity="0"/><stop offset=".985" stop-color="#000" stop-opacity=".1"/><stop offset=".988" stop-color="#fff" stop-opacity=".2"/><stop offset=".992" stop-color="#fff" stop-opacity=".12"/><stop offset=".994" stop-color="#000" stop-opacity=".55"/><stop offset="1" stop-color="#000" stop-opacity=".6"/>
  </linearGradient>
  <linearGradient id="gRecTop" x1="0" y1="233" x2="0" y2="272" gradientUnits="userSpaceOnUse"><stop offset="0.000" stop-color="#6e6c6a"/><stop offset="0.103" stop-color="#a4a09e"/><stop offset="0.897" stop-color="#9c9896"/><stop offset="1.000" stop-color="#8a8684"/></linearGradient>
  <linearGradient id="gRecA" x1="0" y1="271" x2="0" y2="331" gradientUnits="userSpaceOnUse"><stop offset="0.000" stop-color="#343232"/><stop offset="0.150" stop-color="#3e3c3c"/><stop offset="0.400" stop-color="#504e4e"/><stop offset="0.650" stop-color="#5e5c5c"/><stop offset="0.850" stop-color="#686666"/><stop offset="1.000" stop-color="#605e5e"/></linearGradient>
  <linearGradient id="gRecB" x1="0" y1="331" x2="0" y2="385" gradientUnits="userSpaceOnUse"><stop offset="0.000" stop-color="#5e5c5c"/><stop offset="0.111" stop-color="#686666"/><stop offset="0.278" stop-color="#706e6e"/><stop offset="0.463" stop-color="#5a5858"/><stop offset="0.648" stop-color="#4a4848"/><stop offset="0.796" stop-color="#5e5c5c"/><stop offset="0.926" stop-color="#7a7878"/><stop offset="1.000" stop-color="#4a4848"/></linearGradient>
  <linearGradient id="gFilL" x1="424" y1="0" x2="456" y2="0" gradientUnits="userSpaceOnUse">
    <stop offset="0" stop-color="#4c4a4a"/><stop offset=".3" stop-color="#7a7878"/><stop offset=".65" stop-color="#5e5c5c"/><stop offset="1" stop-color="#4e4c4c"/>
  </linearGradient>
  <linearGradient id="gFilR" x1="656" y1="0" x2="688" y2="0" gradientUnits="userSpaceOnUse">
    <stop offset="0" stop-color="#4e4c4c"/><stop offset=".35" stop-color="#5e5c5c"/><stop offset=".7" stop-color="#7a7878"/><stop offset="1" stop-color="#4c4a4a"/>
  </linearGradient>
  <linearGradient id="gArm" x1="780" y1="500" x2="1040" y2="640" gradientUnits="userSpaceOnUse">
    <stop offset="0" stop-color="#3a3a3a"/><stop offset=".5" stop-color="#333"/><stop offset="1" stop-color="#2a2a2a"/>
  </linearGradient>
  <linearGradient id="gArmLow" x1="0" y1="600" x2="0" y2="1000" gradientUnits="userSpaceOnUse">
    <stop offset="0" stop-color="#3b3b3b"/><stop offset=".4" stop-color="#2b2b2b"/><stop offset=".75" stop-color="#1c1b1b"/><stop offset="1" stop-color="#161515"/>
  </linearGradient>
  <linearGradient id="gRib" x1="0" y1="0" x2="1" y2="0.22">
    <stop offset="0" stop-color="#2e2e2e"/><stop offset=".3" stop-color="#454545"/><stop offset=".55" stop-color="#9a9a9a"/><stop offset=".7" stop-color="#555"/><stop offset="1" stop-color="#333"/>
  </linearGradient>
  <linearGradient id="gPocket" x1="0" y1="660" x2="0" y2="845" gradientUnits="userSpaceOnUse">
    <stop offset="0" stop-color="#191817"/><stop offset=".2" stop-color="#222224"/><stop offset=".27" stop-color="#262628"/><stop offset=".36" stop-color="#1e1c1b"/><stop offset=".58" stop-color="#201d1c"/><stop offset=".65" stop-color="#141312"/><stop offset=".75" stop-color="#1c1a19"/><stop offset=".9" stop-color="#1e1d1c"/><stop offset="1" stop-color="#161514"/>
  </linearGradient>
  <filter id="b1" filterUnits="userSpaceOnUse" x="0" y="0" width="1920" height="1080"><feGaussianBlur stdDeviation="1"/></filter>
  <filter id="b2" filterUnits="userSpaceOnUse" x="0" y="0" width="1920" height="1080"><feGaussianBlur stdDeviation="2.2"/></filter>
  <filter id="b4" filterUnits="userSpaceOnUse" x="0" y="0" width="1920" height="1080"><feGaussianBlur stdDeviation="4"/></filter>
  <filter id="b05" filterUnits="userSpaceOnUse" x="0" y="0" width="1920" height="1080"><feGaussianBlur stdDeviation=".55"/></filter>
  <clipPath id="cpArm"><path id="armSil" d="M775.6 408 C800 475 870 548 926 577 L938 578 L982 588 L1027 597 L1050 602 Q1063 605 1062 616 L1058 652 Q1056 663 1046 663.5 L1030 664 Q1023 666 1022 678 L969 933 L986 945 Q993 949 992 957 L987 985 Q984 1001 968 999 L962 998 L920 992.5 L896 987 L859 978 L822 966 L785 955 L748 944 L711 934 L674 921 L637 910 L600 900 L570 892.5 L528 878 L487 863 L445 849 L416 839.5 L416 800 L775 800Z"/></clipPath>
</defs>
<g filter="url(#b05)">
  <!-- arm silhouette -->
  <path d="M775.6 408 C800 475 870 548 926 577 L938 578 L982 588 L1027 597 L1050 602 Q1063 605 1062 616 L1058 652 Q1056 663 1046 663.5 L1030 664 Q1023 666 1022 678 L969 933 L986 945 Q993 949 992 957 L987 985 Q984 1001 968 999 L962 998 L920 992.5 L896 987 L859 978 L822 966 L785 955 L748 944 L711 934 L674 921 L637 910 L600 900 L570 892.5 L528 878 L487 863 L445 849 L416 839.5 L416 800 L775 800Z" fill="url(#gArmLow)"/>
  <g clip-path="url(#cpArm)">
    <!-- upper web surface -->
    <path d="M775 400 C800 475 870 548 926 577 L1050 602 L1062 616 L1056 663 L1022 668 L880 640 L775 560Z" fill="#393939"/>
    <path d="M782 428 C806 488 868 552 922 584" fill="none" stroke="#4c4c4c" stroke-width="11" filter="url(#b2)"/>
    <path d="M779 420 C803 482 868 548 924 580" fill="none" stroke="#8a8a8a" stroke-width="3" filter="url(#b1)"/>
    <path d="M777 440 C800 500 870 565 940 600 L1010 650" fill="none" stroke="#1c1c1c" stroke-width="1.2"/>
    <path d="M777 470 C800 520 850 560 900 590" fill="none" stroke="#424242" stroke-width="14" filter="url(#b4)"/>
    <!-- end flange -->
    <path d="M926 577 L938 578 L1050 602 Q1063 605 1062 616 L1058 652 Q1056 663 1046 663.5 L1022 664 L995 640 Z" fill="#3b3b3b"/>
    <path d="M926 577 L938 578 L1050 602 Q1060 605 1061 613 L1052 616 L1000 605 L945 592Z" fill="#5a5a5a" filter="url(#b1)"/>
    <path d="M1000 594 L1050 604 Q1058 606 1059 613 L1050 614 L1002 603Z" fill="#737373" filter="url(#b1)"/>
    <path d="M1046 606 Q1058 609 1057 620 L1053 652" fill="none" stroke="#6a6a6a" stroke-width="2" filter="url(#b1)"/>
    <path d="M1046 612 L1061 614 L1056 662 L1036 662Z" fill="#282828" filter="url(#b1)"/>
    <path d="M960 600 L1040 618 L1036 655 L1000 650Z" fill="#444" filter="url(#b2)"/>
    <!-- outer column -->
    <path d="M940 640 L1024 666 L969 936 L900 915 Z" fill="#242424"/>
    <path d="M975 655 L1000 664 L950 925 L925 917Z" fill="#444" filter="url(#b4)"/>
    <path d="M1012 668 L1022 672 L970 930 L960 926Z" fill="#1e1e1e" filter="url(#b2)"/>
    <path d="M950 645 L962 649 L910 915 L898 910Z" fill="#181818" filter="url(#b2)"/>
    <!-- pocket on arm -->
    <path d="M782 590 Q782 562 811 560 C840 562 890 590 920 609 Q940 620 937 640 L897 880 Q890 922 855 918 L826 908 L764 850 Q770 850 776 830Z" fill="#2b2b2b" stroke="#141414" stroke-width="1.5"/>
    <path d="M786 592 Q786 568 811 565 L811 600 L806 840 L780 838Z" fill="#2e2e2e" filter="url(#b1)"/>
    <path d="M808 598 C830 592 880 617 905 637 L868 862 Q840 886 806 846 Z" fill="#393939" filter="url(#b1)"/>
    <path d="M830 640 L880 660 L850 850 L815 835Z" fill="#414141" filter="url(#b4)"/>
    <path d="M803 582 C840 578 895 607 920 630" fill="none" stroke="#262220" stroke-width="15" filter="url(#b2)"/>
    <path d="M806 590 V842" fill="none" stroke="#1c1c1c" stroke-width="1.2"/>
    <!-- bright rib -->
    <path d="M907 616 Q930 623 927 646 L888 878 Q882 908 857 910 L842 909 L775 848" fill="none" stroke="#424242" stroke-width="26" stroke-linejoin="round"/>
    <path d="M888 628 Q904 634 902 652 L866 866 Q862 886 846 886 L838 884 L792 842" fill="none" stroke="#4e4e4e" stroke-width="16" stroke-linejoin="round" filter="url(#b4)"/>
    <path d="M900 622 Q918 628 916 647 L878 874 Q873 898 853 900 L842 899 L780 842" fill="none" stroke="#626262" stroke-width="10" stroke-linejoin="round" filter="url(#b2)"/>
    <path d="M935 641 L897 881 Q891 916 859 920 L838 918 L768 858" fill="none" stroke="#1b1b1b" stroke-width="5" stroke-linejoin="round" filter="url(#b1)"/>
    <path d="M920 642 L884 872 Q879 900 857 904 L842 904 L778 850" fill="none" stroke="#9a9a9a" stroke-width="2.8" filter="url(#b1)"/>
    <path d="M918 650 L888 845" fill="none" stroke="#d8d8d8" stroke-width="1.6" filter="url(#b1)"/>
    <path d="M846 905 L790 858" fill="none" stroke="#b8b8b8" stroke-width="1.5" filter="url(#b1)"/>
    <path d="M905 618 Q924 620 928 640" fill="none" stroke="#7c7c7c" stroke-width="2.2" filter="url(#b1)"/>
    <!-- lower flange -->
    <path d="M900 915 L969 935 L990 948 L986 990 L965 1000 L870 980Z" fill="#232121"/>
    <path d="M903 920 Q925 933 966 936 L988 949" fill="none" stroke="#b4b4b4" stroke-width="3.4" filter="url(#b1)"/>
    <path d="M930 930 L926 990" stroke="#111" stroke-width="1"/>
    <!-- underside shadow -->
    <path d="M416 838 L692 838 L700 850 C760 870 800 930 850 975 L640 912 L520 874Z" fill="#131212"/>
    <path d="M692 846 C750 852 790 900 830 935 C860 956 900 970 962 985" fill="none" stroke="#2b2929" stroke-width="12" filter="url(#b2)"/>
    <path d="M700 842 C760 850 800 905 840 935 C870 952 910 965 965 975" fill="none" stroke="#0c0c0c" stroke-width="1.2"/>
  </g>
  <!-- main body -->
  <path d="M335 223 Q335 215 343 215 H416 Q424 215 424 222 C425 230 440 233 455 233 H657 C672 233 686 230 687 222 Q687 215 695 215 H767 Q775 215 775 223 V384 H335Z" fill="url(#gLug)"/>
  <rect x="335" y="384" width="440" height="284" fill="url(#gBody)"/>
  <path d="M335 668 H775 V836 H343 Q335 836 335 828Z" fill="url(#gLow)"/>
  <path d="M335 223 Q335 215 343 215 H416 Q424 215 424 222 V384 H687 V222 Q687 215 695 215 H767 Q775 215 775 223 V836 H343 Q335 836 335 828Z" fill="url(#gEdgeL)"/>
  <!-- recess -->
  <path d="M424 222 C425 230 440 233 455 233 H657 C672 233 686 230 687 222 V355 Q687 385 657 385 H455 Q424 385 424 355Z" fill="#4a4848"/>
  <path d="M424 222 C425 230 440 233 455 233 V385 Q424 385 424 355Z" fill="url(#gFilL)"/>
  <path d="M687 222 C686 230 672 233 657 233 V385 Q687 385 687 355Z" fill="url(#gFilR)"/>
  <rect x="455" y="233" width="202" height="39" fill="url(#gRecTop)"/>
  <path d="M424 222 C425 230 440 234 455 234 L455 271 C440 270 427 262 424 250Z" fill="#8a8886"/>
  <path d="M687 222 C686 230 672 234 657 234 L657 271 C672 270 684 262 687 250Z" fill="#8a8886"/>
  <rect x="455" y="271" width="202" height="60" fill="url(#gRecA)"/>
  <rect x="455" y="331" width="202" height="54" fill="url(#gRecB)"/>
  <path d="M455 233 V385 M657 233 V385" stroke="#1c1c1c" stroke-width=".8" fill="none"/>
  <path d="M424 331 H687" stroke="#111" stroke-width="1"/>
  <path d="M424 250 C427 262 440 270 455 271.5 H657 C672 270 684 262 687 250" stroke="#1a1a1a" stroke-width="1" fill="none"/>
  <path d="M424 222 C425 230 440 233 455 233 H657 C672 233 686 230 687 222" stroke="#222" stroke-width="1" fill="none"/>
  <path d="M424 222 V355 Q424 385 455 385 H657 Q687 385 687 355 V222" stroke="#1c1c1c" stroke-width="1.2" fill="none"/>
  <path d="M419.500 219 V383 M691.500 219 V383" stroke="#9a9a9a" stroke-width="1.2" opacity=".7" filter="url(#b1)"/>
  <!-- hole -->
  <ellipse cx="555.5" cy="270" rx="30" ry="10.5" fill="#3a3838" stroke="#1a1a1a" stroke-width="1"/>
  <ellipse cx="557" cy="272.500" rx="17.600" ry="6.300" fill="#060606"/>
  <path d="M530 268 Q555 257 580 268" stroke="#777" stroke-width="1.2" fill="none" filter="url(#b1)"/>
  <!-- seams -->
  <path d="M335 384 H424 M687 384 H775" stroke="#1a1a1a" stroke-width="1"/>
  <path d="M335 668 H775" stroke="#1a1a1a" stroke-width="1"/>
  <!-- bottom pocket -->
  <path d="M445 660 H665 Q692 660 692 688 V818 Q692 845 665 845 H445 Q418 845 418 818 V688 Q418 660 445 660Z" fill="#211f1e" stroke="#101010" stroke-width="1.5"/>
  <path d="M445 664 H665 Q688 664 688 688 V818 Q688 841 665 841 H445 Q422 841 422 818 V688 Q422 664 445 664Z" fill="none" stroke="#3c3c3c" stroke-width="2" filter="url(#b1)"/>
  <rect x="452" y="676" width="204" height="160" rx="8" fill="url(#gPocket)" filter="url(#b2)"/>
  <path d="M677 692 V818" stroke="#3e3e3e" stroke-width="14" filter="url(#b2)"/>
  <path d="M678 690 V735 M678 770 V812" stroke="#585858" stroke-width="7" filter="url(#b2)"/>
  <path d="M434 700 V815" stroke="#2a2a2a" stroke-width="7" filter="url(#b2)"/>
  <path d="M460 827 H656" stroke="#2c2c2c" stroke-width="1.5" filter="url(#b1)"/>
  <path d="M445 663 H665" stroke="#303030" stroke-width="3" filter="url(#b1)"/>
</g>
</svg>
<div id="rpanel">
  <div id="rhead"><span class="blur" style="display:inline-block;letter-spacing:-.4px;position:relative;left:-10px">3DEXPERIENCE</span></div>
  <div class="abs blur" style="left:10px;top:4px;font-size:9px;color:#333;letter-spacing:-1px">&raquo;</div>
  <svg class="blur" style="left:686px;top:3px" width="34" height="16"><circle cx="8" cy="8" r="6.5" fill="#e4e4e4" stroke="#999" stroke-width="1"/><path d="M5.5 6.5 H10.5 L8 10.5Z" fill="#888"/><path d="M24 5 L31 8 L24 11 L26 8Z" fill="#222"/></svg>
  <div id="bluebar">
    <svg class="blur" style="left:6px;top:6px" width="34" height="32" viewBox="0 0 34 32"><circle cx="16" cy="15" r="12.5" fill="#4d86b5"/><path d="M5 15 C7 6 24 3 28 12 C24 9 10 10 5 15Z" fill="#9fb6c6"/><circle cx="16" cy="16" r="6" fill="#2f79b5"/><path d="M14 13 L20 16 L14 19Z" fill="#1d5a8c"/><path d="M6 19 C10 26 22 27 27 20" fill="none" stroke="#86a5bb" stroke-width="2"/></svg>
    <div class="abs blur" style="left:61px;top:11px;font-size:14.5px;font-weight:bold;color:#eef3f7;letter-spacing:-.2px">3DDrive</div>
    <svg class="blur" style="left:338px;top:16px" width="16" height="12"><path d="M2 3 L8 9 L14 3" fill="none" stroke="#fff" stroke-width="2.2"/></svg>
    <div class="abs" style="left:368px;top:6px;width:218px;height:29.5px;background:#fdfdfd;border-radius:3px"></div>
    <div class="abs blur" style="left:380px;top:13px;font-size:12px;color:#c9d0d8;letter-spacing:.8px">Search</div>
    <svg class="blur" style="left:559px;top:18px" width="14" height="10"><path d="M2 2 L6.5 6.5 L11 2" fill="none" stroke="#777" stroke-width="1.3"/></svg>
    <svg class="blur" style="left:594px;top:9px" width="28" height="26" viewBox="0 0 28 26"><path d="M4 7 L9 3 L23 15 L17 22 L3 10Z" fill="none" stroke="#fff" stroke-width="2.2" stroke-linejoin="round"/><circle cx="8" cy="8" r="1.4" fill="#fff"/></svg>
    <svg class="blur" style="left:641px;top:11px" width="22" height="24"><path d="M2 3 H18 M2 10.5 H18 M2 18 H18" stroke="#fff" stroke-width="3"/></svg>
    <div class="abs" style="left:675px;top:9px;width:2px;height:26px;background:#b9cbdb"></div>
    <svg class="blur" style="left:686px;top:13px" width="20" height="20"><path d="M2 2 L15 15 M15 2 L2 15" stroke="#fff" stroke-width="3"/></svg>
  </div>
  <div id="subbar">
    <div class="abs" style="left:5px;top:5px;width:35px;height:35px;background:#7c1c78;border-radius:2px"></div>
    <svg class="blur" style="left:11px;top:11px" width="24" height="24" viewBox="0 0 24 24"><path d="M5 7 L13 3 L20 7 L20 16 L12 21 L5 16Z" fill="none" stroke="#f1dff0" stroke-width="2" stroke-linejoin="round"/><path d="M8 9 L14 8 L16 14 L10 16Z" fill="#561255" stroke="#e3c6e2" stroke-width="1.4"/></svg>
    <div class="abs" style="left:52px;top:13px;font-size:15px;color:#d6d6d6;letter-spacing:1px;filter:blur(.8px)">60214532-A 3dxml</div>
    <svg class="blur" style="left:453px;top:11px" width="250" height="26" viewBox="0 0 250 26">
      <path d="M3 4 H21 V16 H10 L6 20 V16 H3Z" fill="#555"/><path d="M6 8 H18 M6 12 H14" stroke="#ddd" stroke-width="1.2"/>
      <path d="M47 19 C49 12 54 10 60 10 L60 5 L68 12 L60 18 L60 14 C55 14 51 15 47 19Z" fill="#fafafa" stroke="#666" stroke-width="1.5" stroke-linejoin="round"/>
      <path d="M101 3 V14 M96 10 L101 15 L106 10 M92 14 V20 H110 V14" fill="none" stroke="#444" stroke-width="1.8"/>
      <circle cx="146" cy="12" r="8.5" fill="#f4f4f4" stroke="#444" stroke-width="1.8"/><path d="M146 4 A8 8 0 0 0 146 20Z" fill="#444"/><path d="M146 7 V9 M146 11 V17" stroke="#999" stroke-width="1.6"/>
      <path d="M184 9 L189 14 L194 9" fill="none" stroke="#444" stroke-width="1.6"/>
      <path d="M216 -3 V28" stroke="#e2e2e2" stroke-width="1"/>
      <path d="M235 4 L248 17 M248 4 L235 17" stroke="#222" stroke-width="1.9"/>
    </svg>
  </div>
  <!-- nav arrows -->
  <svg class="blur" style="left:26px;top:492px" width="24" height="66"><path d="M18 3 L4 33 L18 63" fill="none" stroke="#9a9a9a" stroke-width="1.3"/></svg>
  <svg class="blur" style="left:680px;top:492px" width="24" height="66"><path d="M5 3 L21 33 L5 63" fill="none" stroke="#1f5280" stroke-width="2"/></svg>
  <svg class="blur" style="left:664px;top:528px" width="20" height="24" viewBox="0 0 20 24"><path d="M6 12 V5 Q7.5 3 9 5 V11 L14 12 Q17 13 16 17 L15 21 H7 L3 15 Q4 12 6 14Z" fill="#f4f4f4" stroke="#555" stroke-width="1.2"/></svg>
  <!-- bottom tool tabs -->
  <div class="abs" style="left:288px;top:864px;width:66px;height:23px;background:#dde6ee;border-radius:2px 0 0 0"></div>
  <div class="abs" style="left:354px;top:864px;width:65px;height:23px;background:#a9cbe9;border-radius:0 2px 0 0"></div>
  <div class="abs" style="left:309px;top:869px;font-size:10px;color:#8c97a1;filter:blur(.8px)">View</div>
  <div class="abs" style="left:372px;top:869px;font-size:10px;color:#6a93b6;filter:blur(.8px)">Tools</div>
  <svg class="blur" style="left:422px;top:868px" width="18" height="14"><path d="M2 3 L9 1 L16 4 L9 12Z" fill="#f2f2f2" stroke="#d6d6d6" stroke-width="1"/></svg>
  <div class="abs" style="left:162px;top:886px;width:408px;height:50px;background:#eef0f3;border:1px solid #d9dde2;box-sizing:border-box;border-bottom:none"></div>
  <div class="abs" style="left:163px;top:887px;width:96px;height:49px;background:#fdfdfd;border-right:1px solid #c9ccd0;box-sizing:border-box"></div>
  <div class="abs" style="left:526px;top:895px;width:36px;height:37px;background:#a6ceef;border-radius:2px"></div>
  <svg class="blur" style="left:162px;top:886px" width="408" height="52" viewBox="0 0 408 52">
    <!-- fit all -->
    <path d="M13 19 L22 12 L31 15 L32 27 L23 33 L14 29Z" fill="#5aa0cf" stroke="#2f6f9e" stroke-width="1"/><circle cx="22" cy="22" r="3.5" fill="#cfe6f6"/>
    <circle cx="10" cy="11" r="2" fill="#1f3f5f"/><circle cx="34" cy="11" r="1.5" fill="#1f3f5f"/><circle cx="10" cy="36" r="2" fill="#1f3f5f"/>
    <!-- rotate -->
    <path d="M49 27 C44 18 52 9 60 13 C66 16 66 22 64 25" fill="none" stroke="#777" stroke-width="1.4"/><path d="M62 22 L70 28 L64 36 L57 30Z" fill="#4f94c8"/><circle cx="80" cy="24" r="1.4" fill="#222"/>
    <!-- eye -->
    <path d="M103 25 C110 14 124 14 131 25 C124 35 110 35 103 25Z" fill="#fafafa" stroke="#222" stroke-width="1.5"/><circle cx="116" cy="24" r="6.5" fill="#111"/><circle cx="118" cy="21" r="2" fill="#ddd"/>
    <!-- frame -->
    <rect x="151" y="15" width="16" height="19" fill="#4f94c8"/><path d="M155 19 H163 V30 H155Z" fill="#9fc8e6"/><path d="M147 11 L150 14 M171 11 L168 14 M147 38 L150 35 M171 38 L168 35" stroke="#1f3f5f" stroke-width="1.6"/>
    <!-- zoom -->
    <circle cx="206" cy="21" r="9.5" fill="#f2f4f6" stroke="#666" stroke-width="1.4"/><path d="M198 28 L189 36" stroke="#3d82b3" stroke-width="3.2"/><path d="M202 17 L210 16 L211 25 L203 26Z" fill="#4f94c8"/>
    <!-- section -->
    <path d="M226 19 L254 11 L254 31 L227 38Z" fill="#e4e6e8" stroke="#8a8a8a" stroke-width="1.2"/><path d="M232 32 L247 20 L251 24 L238 36Z" fill="#4f94c8"/><circle cx="265" cy="24" r="1.4" fill="#222"/>
    <!-- pencil -->
    <path d="M283 38 L286 30 L305 12 L310 17 L291 35Z" fill="#3f8fd0" stroke="#1f3f5f" stroke-width="1.1"/><path d="M283 38 L286 30 L291 35Z" fill="#222"/>
    <!-- T -->
    <text x="327" y="38" font-family="Liberation Serif, serif" font-size="31" fill="#111">T</text><path d="M349 14 V38" stroke="#3d6f99" stroke-width="1.2"/>
    <!-- active 2D -->
    <rect x="369" y="14" width="26" height="20" rx="2" fill="#c3def3"/><path d="M374 18 L381 18 L376 29" fill="none" stroke="#8bbde3" stroke-width="2"/><rect x="384" y="17" width="3" height="13" fill="#8bbde3"/>
  </svg>
</div>
<div class="abs" style="left:1914px;top:119px;width:1px;height:939px;background:#a9a9a9"></div>
<div id="status">
  <div class="abs blur" style="left:6px;top:4px;letter-spacing:-.2px">SOLIDWORKS</div>
  <div class="abs blur" style="left:1628px;top:4px;letter-spacing:-.2px">Editing Part</div>
  <div class="abs blur" style="left:1803px;top:4px;letter-spacing:-.2px">Custom</div>
  <div class="abs" style="left:1861px;top:9px;width:3px;height:3px;border-radius:2px;background:#555"></div>
  <svg class="blur" style="left:1886px;top:3px" width="20" height="16"><path d="M2 4 Q9 1 16 4 L15 11 Q9 14 3 11Z" fill="#f4f4f4" stroke="#777" stroke-width="1.2"/></svg>
</div>
<svg id="rmodel" style="left:0;top:0" width="1920" height="1080" viewBox="0 0 1920 1080">
<defs>
  <linearGradient id="rBody" x1="0" y1="385" x2="0" y2="838" gradientUnits="userSpaceOnUse"><stop offset="0.000" stop-color="#5a5a5c"/><stop offset="0.015" stop-color="#6a6a6c"/><stop offset="0.254" stop-color="#646466"/><stop offset="0.325" stop-color="#5e5e60"/><stop offset="0.331" stop-color="#525254"/><stop offset="0.475" stop-color="#565658"/><stop offset="0.651" stop-color="#58585a"/><stop offset="0.695" stop-color="#666668"/><stop offset="0.722" stop-color="#545456"/><stop offset="0.828" stop-color="#505052"/><stop offset="1.000" stop-color="#464648"/></linearGradient>
  <linearGradient id="rEdge" x1="1297" y1="0" x2="1624" y2="0" gradientUnits="userSpaceOnUse">
    <stop offset="0" stop-color="#000" stop-opacity=".35"/><stop offset=".02" stop-color="#000" stop-opacity=".1"/><stop offset=".05" stop-color="#000" stop-opacity="0"/>
    <stop offset=".95" stop-color="#000" stop-opacity="0"/><stop offset=".985" stop-color="#000" stop-opacity=".25"/><stop offset="1" stop-color="#000" stop-opacity=".5"/>
  </linearGradient>
  <linearGradient id="rArm" x1="1624" y1="0" x2="1840" y2="0" gradientUnits="userSpaceOnUse">
    <stop offset="0" stop-color="#505052"/><stop offset=".5" stop-color="#5c5c5e"/><stop offset="1" stop-color="#555557"/>
  </linearGradient>
  <linearGradient id="rRec" x1="0" y1="385" x2="0" y2="535" gradientUnits="userSpaceOnUse"><stop offset="0.000" stop-color="#68686a"/><stop offset="0.340" stop-color="#666668"/><stop offset="0.353" stop-color="#58585a"/><stop offset="0.680" stop-color="#5c5c5e"/><stop offset="0.693" stop-color="#606062"/><stop offset="1.000" stop-color="#646466"/></linearGradient>
</defs>
<g filter="url(#b05)">
  <!-- arm -->
  <path d="M1622 498 C1640 535 1670 570 1716 592 L1742 586 C1790 588 1830 606 1837 624 L1832 656 Q1822 664 1808 668 L1768 850 L1785 864 L1781 894 Q1777 908 1762 906 C1735 906 1715 905 1698 902 C1670 896 1650 880 1636 872 L1575 846 L1462 826 L1462 780 L1622 780Z" fill="url(#rArm)"/>
  <path d="M1622 510 C1645 550 1680 585 1725 605 L1760 640" fill="none" stroke="#3c3c3e" stroke-width="1"/>
  <!-- boss -->
  <path d="M1713 598 C1735 640 1800 662 1834 650 L1831 658 C1800 674 1738 652 1710 606Z" fill="#464648"/>
  <g transform="rotate(14 1776 606)">
    <ellipse cx="1776" cy="615" rx="63" ry="20" fill="#505052"/>
    <ellipse cx="1776" cy="608" rx="63" ry="18" fill="#8a8a8c" stroke="#3c3c3e" stroke-width="1"/>
    <ellipse cx="1779" cy="605" rx="37" ry="11.5" fill="#464648" stroke="#333" stroke-width="1"/>
    <ellipse cx="1776" cy="609" rx="32" ry="7.500" fill="#5c5c5e"/>
  </g>
  <path d="M1795 664 Q1818 666 1832 657" fill="none" stroke="#2c2c2e" stroke-width="1.5"/>
  <!-- column -->
  <path d="M1753 673 Q1775 664 1808 668 L1768 850 L1785 864 L1781 894 L1740 884 L1712 870 L1718 853Z" fill="#525254"/>
  <path d="M1757 676 L1722 852" stroke="#808082" stroke-width="4" filter="url(#b2)"/>
  <path d="M1800 672 L1762 850" stroke="#3c3c3e" stroke-width="6" filter="url(#b2)"/>
  <path d="M1753 673 L1718 853 M1770 668 L1736 856" stroke="#333335" stroke-width="1" fill="none"/>
  <path d="M1718 853 Q1740 866 1785 864" fill="none" stroke="#333335" stroke-width="1.200"/>
  <path d="M1722 858 Q1745 868 1780 867" fill="none" stroke="#8a8a8c" stroke-width="2" filter="url(#b1)"/>
  <!-- arm pocket -->
  <path d="M1631 634 Q1632 612 1655 607 C1690 610 1722 628 1742 648 Q1750 658 1746 672 L1704 836 Q1698 862 1678 860 L1640 846 Q1630 840 1630 828Z" fill="#58585a" stroke="#363638" stroke-width="1.200"/>
  <path d="M1646 640 Q1648 624 1664 622 C1690 628 1712 640 1728 656 L1690 826 Q1684 842 1670 838 L1648 830Z" fill="#606062" stroke="#404042" stroke-width=".9"/>
  <path d="M1664 622 L1650 832 M1706 640 L1672 838" stroke="#444446" stroke-width=".8" fill="none"/>
  <path d="M1640 625 C1680 625 1715 642 1738 662" stroke="#4a4a4c" stroke-width="7" fill="none" filter="url(#b2)"/>
  <!-- lower gusset -->
  <path d="M1428 823 L1565 840 L1636 872 C1650 880 1670 896 1698 902 L1640 860 L1560 822Z" fill="#3c3c3e"/>
  <path d="M1578 842 L1628 866" stroke="#a4a4a6" stroke-width="3" filter="url(#b1)"/>
  <!-- body -->
  <path d="M1297 398 Q1297 391 1305 390 L1345 384 L1380 382 L1440 386 L1500 386 L1560 384 L1600 390 Q1624 392 1624 400 V780 L1622 839 H1562 V824 H1362 V838 H1306 Q1300 838 1300 832 V740 H1297Z" fill="url(#rBody)"/>
  <path d="M1297 398 Q1297 391 1305 390 L1345 384 L1380 382 L1440 386 L1500 386 L1560 384 L1600 390 Q1624 392 1624 400 V780 L1622 839 H1562 V824 H1362 V838 H1306 Q1300 838 1300 832 V740 H1297Z" fill="url(#rEdge)"/>
  <path d="M1299 392 L1345 385 L1380 383 L1440 387 L1500 387 L1560 385 L1620 393" fill="none" stroke="#222" stroke-width="1.8"/>
  <!-- recess top -->
  <path d="M1360 386 H1562 V512 Q1562 535 1540 535 H1382 Q1360 535 1360 512Z" fill="url(#rRec)" stroke="#3a3a3c" stroke-width="1"/>
  <path d="M1387 388 V533 M1536 388 V533" stroke="#333" stroke-width=".9"/>
  <path d="M1364 425 Q1368 437 1387 437 H1536 Q1556 437 1559 425" fill="none" stroke="#333" stroke-width="1"/>
  <path d="M1360 488 H1562" stroke="#333" stroke-width="1"/>
  <path d="M1373 392 V515 Q1373 528 1386 530" fill="none" stroke="#727274" stroke-width="12" filter="url(#b2)"/>
  <path d="M1549 392 V515 Q1549 528 1536 530" fill="none" stroke="#727274" stroke-width="12" filter="url(#b2)"/>
  <ellipse cx="1460" cy="433" rx="21" ry="11.5" fill="#545456" stroke="#333" stroke-width="1"/>
  <ellipse cx="1460" cy="434" rx="12" ry="7" fill="#474749"/>
  <g stroke="#f6f6f6" stroke-width="3.8" filter="url(#b1)">
    <path d="M1388 450 H1534 M1388 478 H1534 M1388 496 H1534 M1388 522 H1534"/>
    <path d="M1302 425 H1357 M1302 477 H1357 M1565 425 H1618 M1565 477 H1618"/>
    <path d="M1302 749 H1357 M1565 749 H1618"/>
  </g>
  <path d="M1297 533 H1362 M1560 533 H1624" stroke="#333" stroke-width="1"/>
  
  <!-- bottom pocket -->
  <path d="M1369 732 H1553 Q1560 734 1560 748 V824 H1362 V760 Q1362 740 1369 732Z" fill="#4c4c4e" stroke="#38383a" stroke-width="1"/>
  <path d="M1385 734 V822 M1537 734 V822" stroke="#343436" stroke-width=".9"/>
  <path d="M1366 762 H1558 M1385 814 H1537" stroke="#343436" stroke-width=".9"/>
  <rect x="1385" y="734" width="152" height="28" fill="#525254"/>
  <rect x="1385" y="763" width="152" height="36" fill="#565658"/>
  <path d="M1364 760 Q1366 738 1385 734 V822 H1364Z" fill="#5e5e60" opacity=".7"/>
  <path d="M1558 760 Q1556 738 1537 734 V822 H1558Z" fill="#5e5e60" opacity=".7"/>
  <path d="M1386 800 H1536" stroke="#c4c4c6" stroke-width="1.8" filter="url(#b1)"/>
  <path d="M1366 790 Q1368 802 1385 802 M1556 790 Q1554 802 1537 802" stroke="#9a9a9c" stroke-width="1.3" fill="none" filter="url(#b1)"/>
  <path d="M1300 738 H1364 M1560 738 H1622" stroke="#2e2e30" stroke-width="1"/>
  <path d="M1300 838.500 H1362 M1562 839.500 H1622" stroke="#2a2a2c" stroke-width="1.5"/>
  <path d="M1362 824 H1430" stroke="#2a2a2c" stroke-width="1.2"/>
  <!-- yellow markup -->
  <path d="M1303 706 H1619" stroke="#c6c6c8" stroke-width="8" filter="url(#b2)" opacity=".9"/>
  <path d="M1589 703 V558 H1325.500 V703" fill="none" stroke="#f8cb14" stroke-width="5" stroke-linejoin="round"/>
  <path d="M1332 701 H1588" stroke="#eec234" stroke-width="7.500" filter="url(#b1)"/>
  <path d="M1358.500 586 L1558 584.500 L1559.500 672 L1359.500 673.500Z" fill="none" stroke="#fad016" stroke-width="5.200" stroke-linejoin="round"/>
  <path d="M1599.500 900 C1612 893 1622 885 1630 872 C1642 852 1646 834 1643 820 C1640 800 1632 786 1622 770 C1612 754 1596 734 1577 719" fill="none" stroke="#f5bd14" stroke-width="3.800" stroke-linecap="round"/>
  <path d="M1608 717.500 L1576 717.500 L1588 741" fill="none" stroke="#f5bd14" stroke-width="4" stroke-linecap="round" stroke-linejoin="round"/>
</g>
<!-- dimension -->
<g filter="url(#b05)">
  <path d="M1297 372 V398 M1624 372 V398" stroke="#999" stroke-width="1"/>
  <path d="M1300 374.500 H1621" stroke="#808080" stroke-width="1"/>
  <path d="M1298 374.500 L1305 371.500 L1305 377.500Z M1623 374.500 L1616 371.500 L1616 377.500Z" fill="#222"/>
  <rect x="1428" y="361.500" width="65" height="26.500" rx="2" fill="#2f8fd1"/>
  <text x="1460.500" y="379" text-anchor="middle" font-family="Liberation Sans, sans-serif" font-size="10.500" font-weight="bold" fill="#dcebf7" style="filter:blur(.5px)">74.2mm</text>
  <text x="1457" y="879" font-family="Liberation Sans, sans-serif" font-size="16" font-weight="bold" fill="#ecc89c" textLength="152" style="filter:blur(.9px)">Pocket w/ thru hole</text>
  <!-- axis -->
  <path d="M1877 957 V983 H1858" fill="none" stroke="#222" stroke-width="1.3"/><path d="M1878.500 958 V975" stroke="#555" stroke-width="2.5"/>
  <text x="1847" y="989" font-family="Liberation Sans, sans-serif" font-size="10" font-weight="bold" fill="#333">Y</text>
</g>
</svg>
</body>
</html>
